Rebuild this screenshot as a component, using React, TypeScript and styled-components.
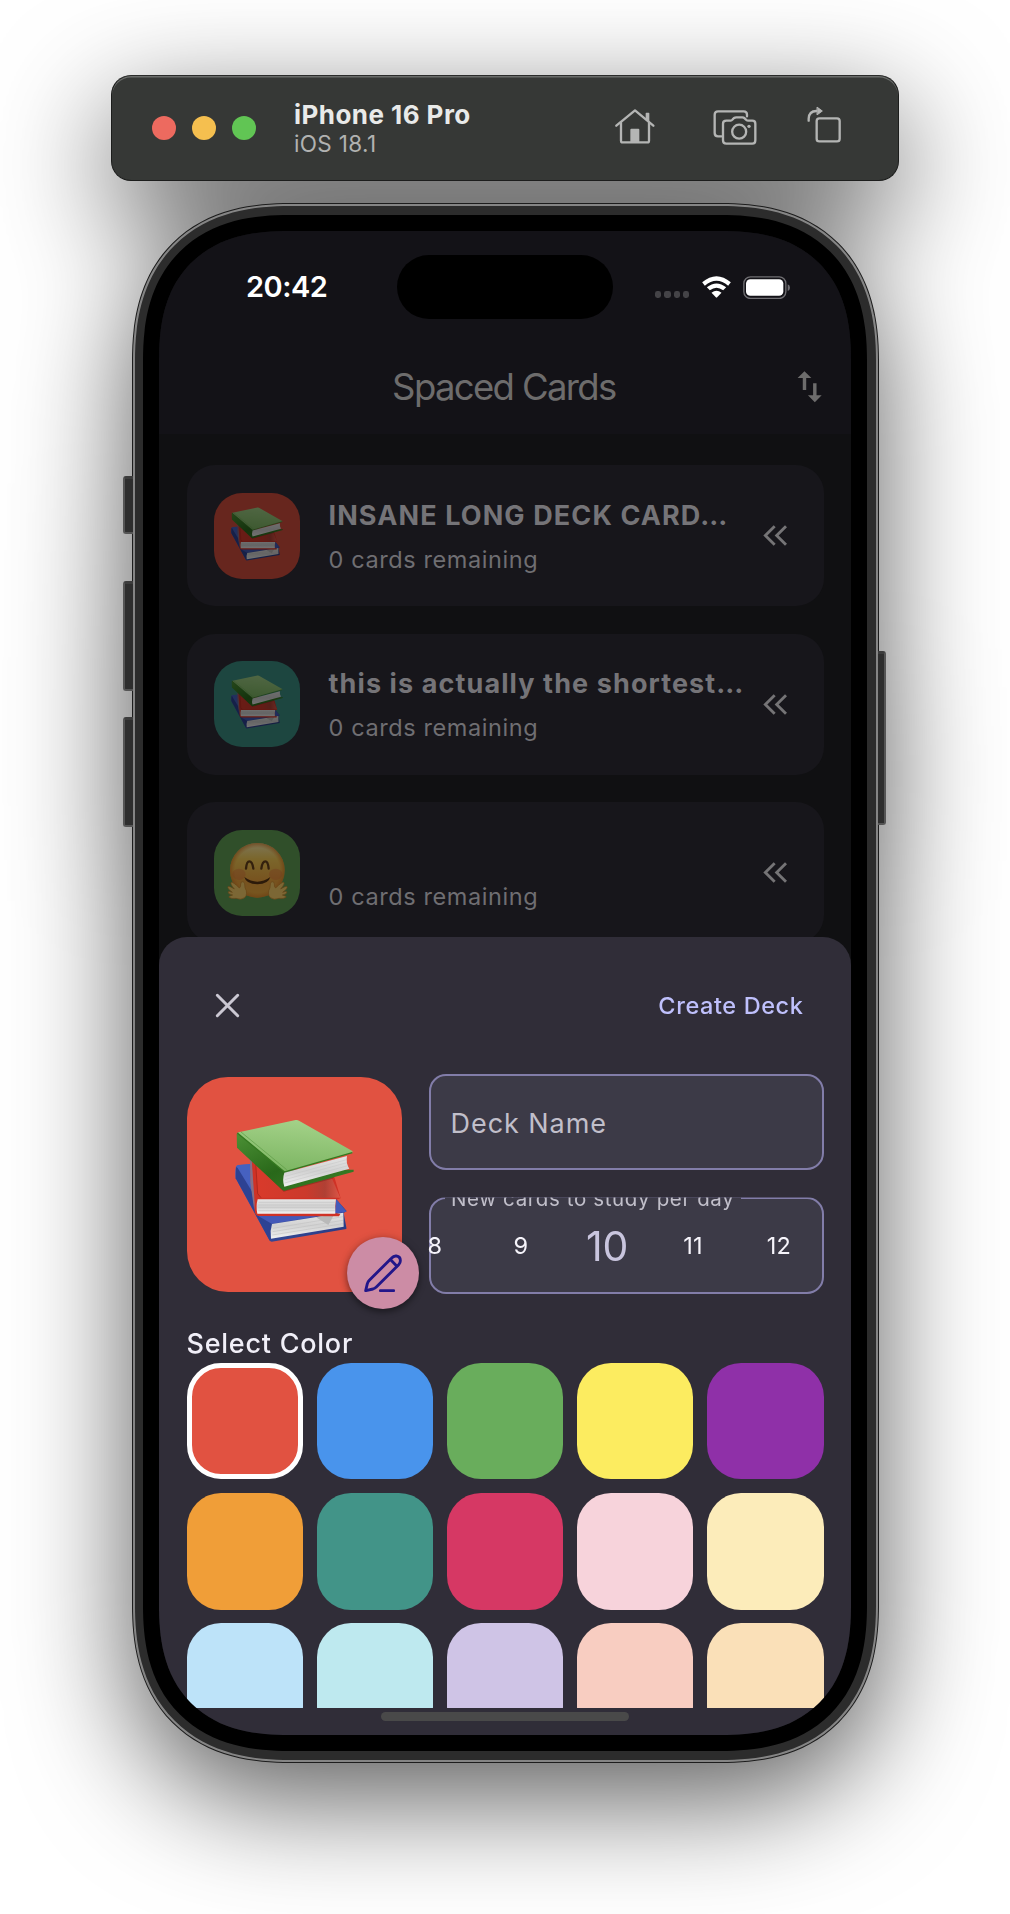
import React from "react";
import styled, { createGlobalStyle, css } from "styled-components";

const Global = createGlobalStyle`
  *, *::before, *::after { box-sizing: border-box; }
  body { margin: 0; background: #fff; overflow: hidden; }
`;

const squircle = (plain: number, radius: number, k: number) => css`
  border-radius: ${plain}px;
  @supports (corner-shape: superellipse(1.2)) {
    border-radius: ${radius}px;
    corner-shape: superellipse(${k});
  }
`;

const Stage = styled.main`
  width: 1010px;
  height: 1914px;
  padding: 75px 0 0 111px;
  display: flex;
  flex-direction: column;
  align-items: flex-start;
  background: #fff;
  font-family: Inter, "Liberation Sans", sans-serif;
`;

const Simulator = styled.div`
  display: flex;
  flex-direction: column;
  gap: 22px;
  filter: drop-shadow(0 36px 58px rgba(0, 0, 0, 0.64));
`;

/* ---------- window toolbar ---------- */

const Toolbar = styled.header`
  width: 788px;
  height: 106px;
  padding: 0 56px 0 40px;
  display: flex;
  align-items: center;
  border-radius: 20px;
  background: #363836;
  border: 1px solid #1c1d1c;
  border-top-color: #2a2b2a;
  box-shadow: inset 0 1.5px 0 #6a6c6a;
`;

const Lights = styled.div`
  display: flex;
  gap: 16px;
  margin-right: 38px;
`;

const Light = styled.span<{ $color: string }>`
  width: 24px;
  height: 24px;
  border-radius: 50%;
  background: ${(p) => p.$color};
`;

const DeviceInfo = styled.div`
  flex: 1;
  display: flex;
  flex-direction: column;
  padding-top: 2px;
`;

const DeviceName = styled.span`
  font-size: 26px;
  line-height: 30px;
  font-weight: 700;
  letter-spacing: 0.45px;
  color: #e9eae9;
`;

const DeviceOs = styled.span`
  font-size: 22.5px;
  line-height: 28px;
  letter-spacing: 0.35px;
  color: #b1b2b1;
`;

const Tools = styled.div`
  display: flex;
  align-items: center;
  padding-bottom: 3px;
`;

const Tool = styled.span<{ $gap: number; $lift?: number }>`
  display: flex;
  margin-left: ${(p) => p.$gap}px;
  padding-bottom: ${(p) => p.$lift ?? 0}px;
`;

/* ---------- phone ---------- */

const Phone = styled.div`
  position: relative;
  width: 747px;
  height: 1560px;
  margin-left: 21px;
  padding: 1px;
  background: #1d1d1d;
  ${squircle(137, 158, 1.237)}
`;

const Rim = styled.div`
  height: 100%;
  padding: 2px;
  background: #858585;
  ${squircle(136, 157, 1.237)}
`;

const Band = styled.div`
  height: 100%;
  padding: 9px 9px 9px 8px;
  background: #2c2c2c;
  ${squircle(134, 155, 1.237)}
`;

const Bezel = styled.div`
  height: 100%;
  padding: 16px;
  background: #000;
  ${squircle(125, 146, 1.26)}
`;

const Screen = styled.div`
  position: relative;
  height: 100%;
  overflow: hidden;
  display: flex;
  flex-direction: column;
  background: #101012;
  ${squircle(109, 130, 1.295)}
`;

const SideKey = styled.span<{ $side: "left" | "right"; $top: number; $height: number }>`
  position: absolute;
  ${(p) => p.$side}: ${(p) => (p.$side === "left" ? -9 : -7)}px;
  top: ${(p) => p.$top}px;
  width: ${(p) => (p.$side === "left" ? 10 : 8)}px;
  height: ${(p) => p.$height}px;
  background: #2e2e2e;
  border: 2px solid #555;
  border-top: 3px solid #3c3c3c;
  border-${(p) => (p.$side === "left" ? "right" : "left")}: 0;
  border-radius: ${(p) => (p.$side === "left" ? "3px 0 0 3px" : "0 3px 3px 0")};
`;

const Island = styled.span`
  position: absolute;
  left: 238px;
  top: 24px;
  width: 216px;
  height: 64px;
  border-radius: 32px;
  background: #000;
`;

const StatusBar = styled.div`
  height: 107px;
  padding: 5px 61px 0 87px;
  display: flex;
  align-items: center;
  justify-content: space-between;
  background: #131217;
`;

const Clock = styled.span`
  font-size: 29px;
  line-height: 36px;
  font-weight: 600;
  letter-spacing: -0.5px;
  color: #fff;
`;

const StatusIcons = styled.div`
  display: flex;
  align-items: center;
  gap: 12.4px;
`;

const Signal = styled.div`
  display: flex;
  gap: 3px;
  padding-top: 15px;
`;

const SignalDot = styled.span`
  width: 6.3px;
  height: 6.3px;
  border-radius: 2.4px;
  background: #444347;
`;

const Header = styled.div`
  height: 96px;
  padding: 2px 21px 0 60px;
  display: flex;
  align-items: center;
  background: #131217;
`;

const Title = styled.h1`
  flex: 1;
  margin: 0;
  font-size: 36.5px;
  line-height: 46px;
  font-weight: 400;
  letter-spacing: -1.65px;
  text-align: center;
  color: #6d6c6c;
`;

/* ---------- deck list ---------- */

const DeckList = styled.div`
  display: flex;
  flex-direction: column;
  gap: 27.5px;
  padding: 31px 27.5px 0;
`;

const DeckCard = styled.article`
  flex: none;
  height: 141px;
  padding: 0 37px 0 27.5px;
  display: flex;
  align-items: center;
  border-radius: 28px;
  background: #17161b;
`;

const DeckIcon = styled.div<{ $color: string }>`
  width: 86px;
  height: 86px;
  margin-right: 28.5px;
  display: flex;
  align-items: center;
  justify-content: center;
  border-radius: 28px;
  background: ${(p) => p.$color};
`;

const Dimmed = styled.div`
  display: flex;
  margin-top: -3px;
  filter: brightness(0.49);
`;

const DeckText = styled.div`
  flex: 1;
  display: flex;
  flex-direction: column;
  gap: 11px;
  padding-top: 3px;
`;

const DeckName = styled.span<{ $spacing: number }>`
  height: 34px;
  font-size: 27px;
  line-height: 34px;
  font-weight: 700;
  letter-spacing: ${(p) => p.$spacing}px;
  white-space: nowrap;
  color: #757478;
`;

const DeckCount = styled.span`
  font-size: 23.5px;
  line-height: 32px;
  letter-spacing: 0.6px;
  color: #6f6e72;
`;

/* ---------- bottom sheet ---------- */

const Sheet = styled.section`
  position: absolute;
  left: 0;
  right: 0;
  bottom: 0;
  height: 798.5px;
  padding: 0 27.5px;
  display: flex;
  flex-direction: column;
  border-radius: 28px 28px 0 0;
  background: #302d38;
`;

const SheetBar = styled.div`
  height: 137.5px;
  padding: 0 20px 0 28.8px;
  display: flex;
  align-items: center;
  justify-content: space-between;
`;

const CreateButton = styled.button`
  padding: 2px 0 0;
  border: 0;
  background: none;
  font-family: inherit;
  font-size: 23.5px;
  line-height: 32px;
  font-weight: 500;
  letter-spacing: 0.6px;
  color: #bfc0fc;
`;

const FormRow = styled.div`
  display: flex;
  gap: 27.5px;
  height: 220px;
`;

const Avatar = styled.div`
  position: relative;
  flex: none;
  width: 215px;
  height: 215px;
  margin-top: 3px;
  display: flex;
  align-items: center;
  justify-content: center;
  border-radius: 41px;
  background: #e15241;
`;

const BigBooks = styled.div`
  display: flex;
  margin-top: -7px;
`;

const EditButton = styled.button`
  position: absolute;
  right: -17px;
  bottom: -17px;
  width: 72px;
  height: 72px;
  padding: 0;
  border: 0;
  border-radius: 50%;
  display: flex;
  align-items: center;
  justify-content: center;
  background: #cc8ca5;
  box-shadow: 0 3px 6px rgba(0, 0, 0, 0.35), 0 1px 10px rgba(0, 0, 0, 0.2);
`;

const Fields = styled.div`
  flex: 1;
  min-width: 0;
  display: flex;
  flex-direction: column;
  gap: 27.5px;
`;

const Field = styled.div`
  position: relative;
  height: 97px;
  display: flex;
  align-items: center;
  border-radius: 17px;
  border: 2px solid #827da9;
  background: #3c3a47;
`;

const Placeholder = styled.span`
  padding: 4px 0 0 19.5px;
  font-size: 27px;
  line-height: 34px;
  letter-spacing: 0.95px;
  color: #c1bfca;
`;

const FloatingLabel = styled.span`
  position: absolute;
  left: 14px;
  top: -12px;
  width: 296px;
  padding-left: 6px;
  font-size: 20.5px;
  line-height: 24px;
  letter-spacing: 0.63px;
  white-space: nowrap;
  color: #c1bfca;
  background: #3c3a47;
`;

/* Cuts the floating label off along the top border of the field. */
const FieldFrame = styled.div`
  height: 97px;
  clip-path: inset(0.5px -2px -2px -2px);
`;

const Wheel = styled.div`
  flex: none;
  width: 430px;
  margin-left: -39px;
  display: flex;
  align-items: center;
`;

const WheelItem = styled.span<{ $active: boolean }>`
  flex: none;
  width: 86px;
  text-align: center;
  line-height: 50px;
  font-size: ${(p) => (p.$active ? 41 : 23.5)}px;
  letter-spacing: ${(p) => (p.$active ? -0.3 : 0.3)}px;
  color: ${(p) => (p.$active ? "#c9c5de" : "#f6f4fb")};
`;

const SectionTitle = styled.h2`
  margin: 33px 0 2px;
  font-size: 27px;
  line-height: 34px;
  font-weight: 500;
  letter-spacing: 0.75px;
  color: #f1eff8;
`;

const Swatches = styled.div`
  height: 344.5px;
  overflow: hidden;
  display: grid;
  grid-template-columns: repeat(5, 1fr);
  grid-auto-rows: 116.4px;
  gap: 13.8px;
`;

const Swatch = styled.button<{ $color: string; $selected: boolean }>`
  padding: 0;
  border-radius: 34px;
  border: ${(p) => (p.$selected ? "5px solid #fff" : "0")};
  background: ${(p) => p.$color};
`;

const HomeIndicator = styled.span`
  position: absolute;
  left: 222px;
  bottom: 14px;
  width: 248px;
  height: 9px;
  border-radius: 5px;
  background: #494949;
`;

/* ---------- drawings ---------- */

const HomeIcon = () => (
  <svg width="40" height="38" viewBox="197 172 120 114" fill="none" stroke="#b4b5b4" strokeWidth="7" strokeLinecap="round" strokeLinejoin="round">
    <path d="M201 225 257 179 312 225" />
    <path d="M215 216V270Q215 275 220 275H294Q299 275 299 270V216" />
    <path d="M291 188H298V210L291 203Z" fill="#b4b5b4" strokeWidth="4" />
    <path d="M245 275V237Q245 236 246 236H267Q268 236 268 237V275Z" fill="#b4b5b4" strokeWidth="4" />
  </svg>
);

const CameraIcon = () => (
  <svg width="44" height="38" viewBox="490 172 132 114" fill="none" stroke="#b4b5b4" strokeWidth="7" strokeLinejoin="round" strokeLinecap="round">
    <path d="M515 257H505Q495 257 495 247V192Q495 182 505 182H582Q592 182 592 192V197" />
    <path d="M530 210H543Q546 210 549 206L553 202Q556 200 560 200H578Q582 200 585 203L590 208Q592 210 596 210H608Q617 210 617 219V269Q617 279 608 279H530Q520 279 520 269V219Q520 210 530 210Z" />
    <circle cx="568.500" cy="243" r="21" />
    <circle cx="598" cy="227" r="5" fill="#b4b5b4" stroke="none" />
  </svg>
);

const RotateIcon = () => (
  <svg width="35" height="38" viewBox="772 164 105 114" fill="none" stroke="#b4b5b4" strokeWidth="7" strokeLinejoin="round" strokeLinecap="round">
    <rect x="801" y="204" width="69" height="69" rx="8" />
    <path d="M777 211V205Q778 182 800 182" />
    <path d="M803 171 818 182 803 193Z" fill="#b4b5b4" strokeWidth="3" />
  </svg>
);

const WifiIcon = () => (
  <svg width="29" height="22" viewBox="455 677 86 66" fill="#fff">
    <path d="M455 696Q498 660 541 696L533 706Q498 677 463 706Z" />
    <path d="M469 711Q498 688 527 711L518 720Q498 705 478 720Z" />
    <path d="M483 727Q498 716 513 727L500 741Q498 743 496 741Z" />
  </svg>
);

const BatteryIcon = () => (
  <svg width="47" height="23" viewBox="579 676 141 69" fill="none">
    <rect x="581.500" y="678.500" width="126" height="65" rx="20" stroke="#6f6e72" strokeWidth="4" />
    <rect x="588" y="685.500" width="112" height="50" rx="13" fill="#fff" />
    <path d="M713 701Q720 704 720 711Q720 718 713 721Z" fill="#6f6e72" />
  </svg>
);

const SortIcon = () => (
  <svg width="41.300" height="41.300" viewBox="0 0 24 24" fill="#6d6c6c">
    <path d="M9 3 5 7H8V14H10V7H13M16 17V10H14V17H11L15 21 19 17H16Z" />
  </svg>
);

const ChevronsIcon = () => (
  <svg width="24" height="21" viewBox="790 555 72 63" fill="none" stroke="#757476" strokeWidth="8.500">
    <path d="M825 559 797 586.500 825 614M859 559 831 586.500 859 614" />
  </svg>
);

const CloseIcon = () => (
  <svg width="25" height="25" viewBox="0 0 25 25" fill="none" stroke="#cbc8d3" strokeWidth="3" strokeLinecap="round">
    <path d="M2.300 2.300 22.700 22.700M22.700 2.300 2.300 22.700" />
  </svg>
);

const PencilIcon = () => (
  <svg width="38" height="38" viewBox="732 1001 114 114" fill="none" stroke="#22168a" strokeWidth="8.500" strokeLinecap="round" strokeLinejoin="round">
    <path d="M737 1111 742 1090Q744 1084 748 1080L815 1013Q821 1006 829 1007Q842 1009 841 1022Q841 1028 836 1033L769 1100Q765 1104 759 1106Z" />
    <path d="M812 1018 830 1037" />
    <path d="M781 1111H821" />
  </svg>
);

const Books = ({ width, id }: { width: number; id: string }) => (
  <svg width={width} height={(width * 371) / 357} viewBox="342 598 357 371">
    <defs>
      <linearGradient id={`${id}-g`} x1="0.6" y1="0" x2="0.4" y2="1">
        <stop offset="0" stopColor="#a4d289" />
        <stop offset="1" stopColor="#7cb562" />
      </linearGradient>
      <linearGradient id={`${id}-s`} x1="0" y1="0" x2="1" y2="1">
        <stop offset="0" stopColor="#4c9135" />
        <stop offset="0.5" stopColor="#29681a" />
        <stop offset="1" stopColor="#3c8027" />
      </linearGradient>
      <linearGradient id={`${id}-p`} x1="0" y1="0" x2="0" y2="1">
        <stop offset="0" stopColor="#e4e4e4" />
        <stop offset="0.5" stopColor="#d2d2d2" />
        <stop offset="1" stopColor="#f0f0f0" />
      </linearGradient>
      <linearGradient id={`${id}-r`} x1="0" y1="0" x2="1" y2="0">
        <stop offset="0" stopColor="#d93a2b" />
        <stop offset="0.6" stopColor="#cb3a2c" />
        <stop offset="0.82" stopColor="#b04034" />
        <stop offset="1" stopColor="#dd5546" />
      </linearGradient>
      <linearGradient id={`${id}-b`} x1="0" y1="0" x2="1" y2="1">
        <stop offset="0" stopColor="#4a63bd" />
        <stop offset="1" stopColor="#27387f" />
      </linearGradient>
    </defs>
    <path d="M345 740 350 736 392 733 420 880 640 832 677 874 668 880 676 923V928L452 966Q448 966 445 962L344 776Q341 758 345 740Z" fill={`url(#${id}-b)`} />
    <path d="M350 737 388 733 408 880 350 745Z" fill="#4661c0" />
    <path d="M345 742 350 745 452 912 447 963 344 776Z" fill="#2d4293" />
    <path d="M413 890 452 912 677 876 642 834Z" fill="#4459b8" />
    <path d="M453 913 667 879 668 921 450 957Q446 935 453 913Z" fill={`url(#${id}-p)`} />
    <path d="M456 926 666 891M455 936 666 902M454 946 666 912" stroke="#bdbdbd" strokeWidth="1.500" />
    <path d="M585 893 640 884 622 916Z" fill="#b9b9b9" />
    <path d="M388 716 400 722 640 772 659 836 645 840 642 880 658 883 654 890 412 889Q404 888 402 880L389 780Z" fill="#cf3226" />
    <path d="M387 716 392 719 401 850 400 872 388 790Z" fill="#857088" />
    <path d="M403 728 632 774 658 834H420L411 820Z" fill={`url(#${id}-r)`} />
    <path d="M404 730 410 822 420 834" fill="none" stroke="#a8251b" strokeWidth="2.500" />
    <path d="M410 839H645Q641 860 643 882H409Q404 860 410 839Z" fill={`url(#${id}-p)`} />
    <path d="M413 848H641M412 856H641M412 864H641M412 873H641" stroke="#bcbcbc" strokeWidth="1.500" />
    <path d="M396 722 488 816 634 777 640 772Z" fill="#7c2018" opacity="0.5" />
    <path d="M347 642 354 638 490 752 698 750V756L490 813 484 811 348 684Z" fill={`url(#${id}-s)`} />
    <path d="M349 640Q352 637 360 636L524 601Q530 600 534 603L694 694Q697 698 692 700L494 756Q490 757 487 754Z" fill={`url(#${id}-g)`} />
    <path d="M349 640 487 754Q490 757 494 756L694 699" fill="none" stroke="#34781f" strokeWidth="4" />
    <path d="M360 637 497 750" stroke="#5d9c45" strokeWidth="3" opacity="0.7" />
    <path d="M490 759 678 709Q674 730 685 747L490 801Q483 780 490 759Z" fill={`url(#${id}-p)`} />
    <path d="M492 770 677 720M491 780 678 729M491 790 681 738" stroke="#c4c4c4" strokeWidth="1.500" />
  </svg>
);

const Hug = () => (
  <svg width="61" height="59" viewBox="352 671 183 177">
    <defs>
      <linearGradient id="hug-face" x1="0" y1="0" x2="0" y2="1">
        <stop offset="0" stopColor="#fff0b0" />
        <stop offset="0.3" stopColor="#fbd057" />
        <stop offset="0.7" stopColor="#f3a83f" />
        <stop offset="1" stopColor="#f2b03f" />
      </linearGradient>
      <radialGradient id="hug-edge">
        <stop offset="0.82" stopColor="#e8892c" stopOpacity="0" />
        <stop offset="1" stopColor="#df7f24" stopOpacity="0.7" />
      </radialGradient>
    </defs>
    <circle cx="443" cy="756" r="82" fill="url(#hug-face)" />
    <circle cx="443" cy="756" r="82" fill="url(#hug-edge)" />
    <ellipse cx="388" cy="768" rx="20" ry="17" fill="#e8623a" opacity="0.3" />
    <ellipse cx="498" cy="768" rx="20" ry="17" fill="#e8623a" opacity="0.3" />
    <path d="M409 751Q411 729 419 729Q428 729 431 751M455 751Q458 729 467 729Q475 729 477 751" fill="none" stroke="#69421a" strokeWidth="7" strokeLinecap="round" />
    <path d="M404 776Q443 804 482 776Q477 797 443 798Q409 797 404 776Z" fill="#5a3514" />
    <g stroke="#d08a2c" strokeWidth="2" fill="#fdd36c" strokeLinejoin="round">
      <path id="hug-hand" d="M405 838Q394 846 379 840Q366 842 358 837Q356 833 364 832L369 830Q356 828 355 821Q357 817 368 822Q352 810 355 805Q359 802 374 812Q360 795 365 792Q371 791 389 809Q394 806 393 797Q394 788 401 790Q406 793 406 808Q416 826 405 838Z" />
      <use href="#hug-hand" transform="translate(887 0) scale(-1 1)" />
    </g>
  </svg>
);

/* ---------- data ---------- */

const decks = [
  { name: "INSANE LONG DECK CARD…", spacing: 1.1, color: "#67261e", hug: false },
  { name: "this is actually the shortest…", spacing: 1.1, color: "#1d4640", hug: false },
  { name: "", spacing: 0, color: "#304f2a", hug: true },
];

const colors = [
  "#e15241", "#4994ec", "#69ad5c", "#fcec60", "#8f30a8",
  "#f09e38", "#429488", "#d63864", "#f7d3db", "#fcecba",
  "#bde3f9", "#bee9ef", "#cfc4e6", "#f8cdc1", "#fae0b8",
];

const perDay = [8, 9, 10, 11, 12];

export default function App() {
  return (
    <Stage>
      <Global />
      <Simulator>
        <Toolbar>
          <Lights>
            <Light $color="#ed6a5f" />
            <Light $color="#f5bf4f" />
            <Light $color="#61c554" />
          </Lights>
          <DeviceInfo>
            <DeviceName>iPhone 16 Pro</DeviceName>
            <DeviceOs>iOS 18.1</DeviceOs>
          </DeviceInfo>
          <Tools>
            <Tool $gap={0}>
              <HomeIcon />
            </Tool>
            <Tool $gap={57.6}>
              <CameraIcon />
            </Tool>
            <Tool $gap={50} $lift={5}>
              <RotateIcon />
            </Tool>
          </Tools>
        </Toolbar>

        <Phone>
          <SideKey $side="left" $top={273} $height={58} />
          <SideKey $side="left" $top={378} $height={110} />
          <SideKey $side="left" $top={514} $height={110} />
          <SideKey $side="right" $top={448} $height={174} />
          <Rim>
            <Band>
              <Bezel>
                <Screen>
                  <StatusBar>
                    <Clock>20:42</Clock>
                    <StatusIcons>
                      <Signal>
                        <SignalDot />
                        <SignalDot />
                        <SignalDot />
                        <SignalDot />
                      </Signal>
                      <WifiIcon />
                      <BatteryIcon />
                    </StatusIcons>
                  </StatusBar>
                  <Header>
                    <Title>Spaced Cards</Title>
                    <SortIcon />
                  </Header>
                  <DeckList>
                    {decks.map((deck) => (
                      <DeckCard key={deck.color}>
                        <DeckIcon $color={deck.color}>
                          <Dimmed>{deck.hug ? <Hug /> : <Books width={52} id={`b${deck.color.slice(1)}`} />}</Dimmed>
                        </DeckIcon>
                        <DeckText>
                          <DeckName $spacing={deck.spacing}>{deck.name}</DeckName>
                          <DeckCount>0 cards remaining</DeckCount>
                        </DeckText>
                        <ChevronsIcon />
                      </DeckCard>
                    ))}
                  </DeckList>

                  <Sheet>
                    <SheetBar>
                      <CloseIcon />
                      <CreateButton>Create Deck</CreateButton>
                    </SheetBar>
                    <FormRow>
                      <Avatar>
                        <BigBooks>
                          <Books width={119} id="big" />
                        </BigBooks>
                        <EditButton>
                          <PencilIcon />
                        </EditButton>
                      </Avatar>
                      <Fields>
                        <Field>
                          <Placeholder>Deck Name</Placeholder>
                        </Field>
                        <FieldFrame>
                          <Field>
                            <FloatingLabel>New cards to study per day</FloatingLabel>
                            <Wheel>
                              {perDay.map((n) => (
                                <WheelItem key={n} $active={n === 10}>{n}</WheelItem>
                              ))}
                            </Wheel>
                          </Field>
                        </FieldFrame>
                      </Fields>
                    </FormRow>
                    <SectionTitle>Select Color</SectionTitle>
                    <Swatches>
                      {colors.map((c, i) => (
                        <Swatch key={c} $color={c} $selected={i === 0} />
                      ))}
                    </Swatches>
                  </Sheet>
                  <Island />
                  <HomeIndicator />
                </Screen>
              </Bezel>
            </Band>
          </Rim>
        </Phone>
      </Simulator>
    </Stage>
  );
}
